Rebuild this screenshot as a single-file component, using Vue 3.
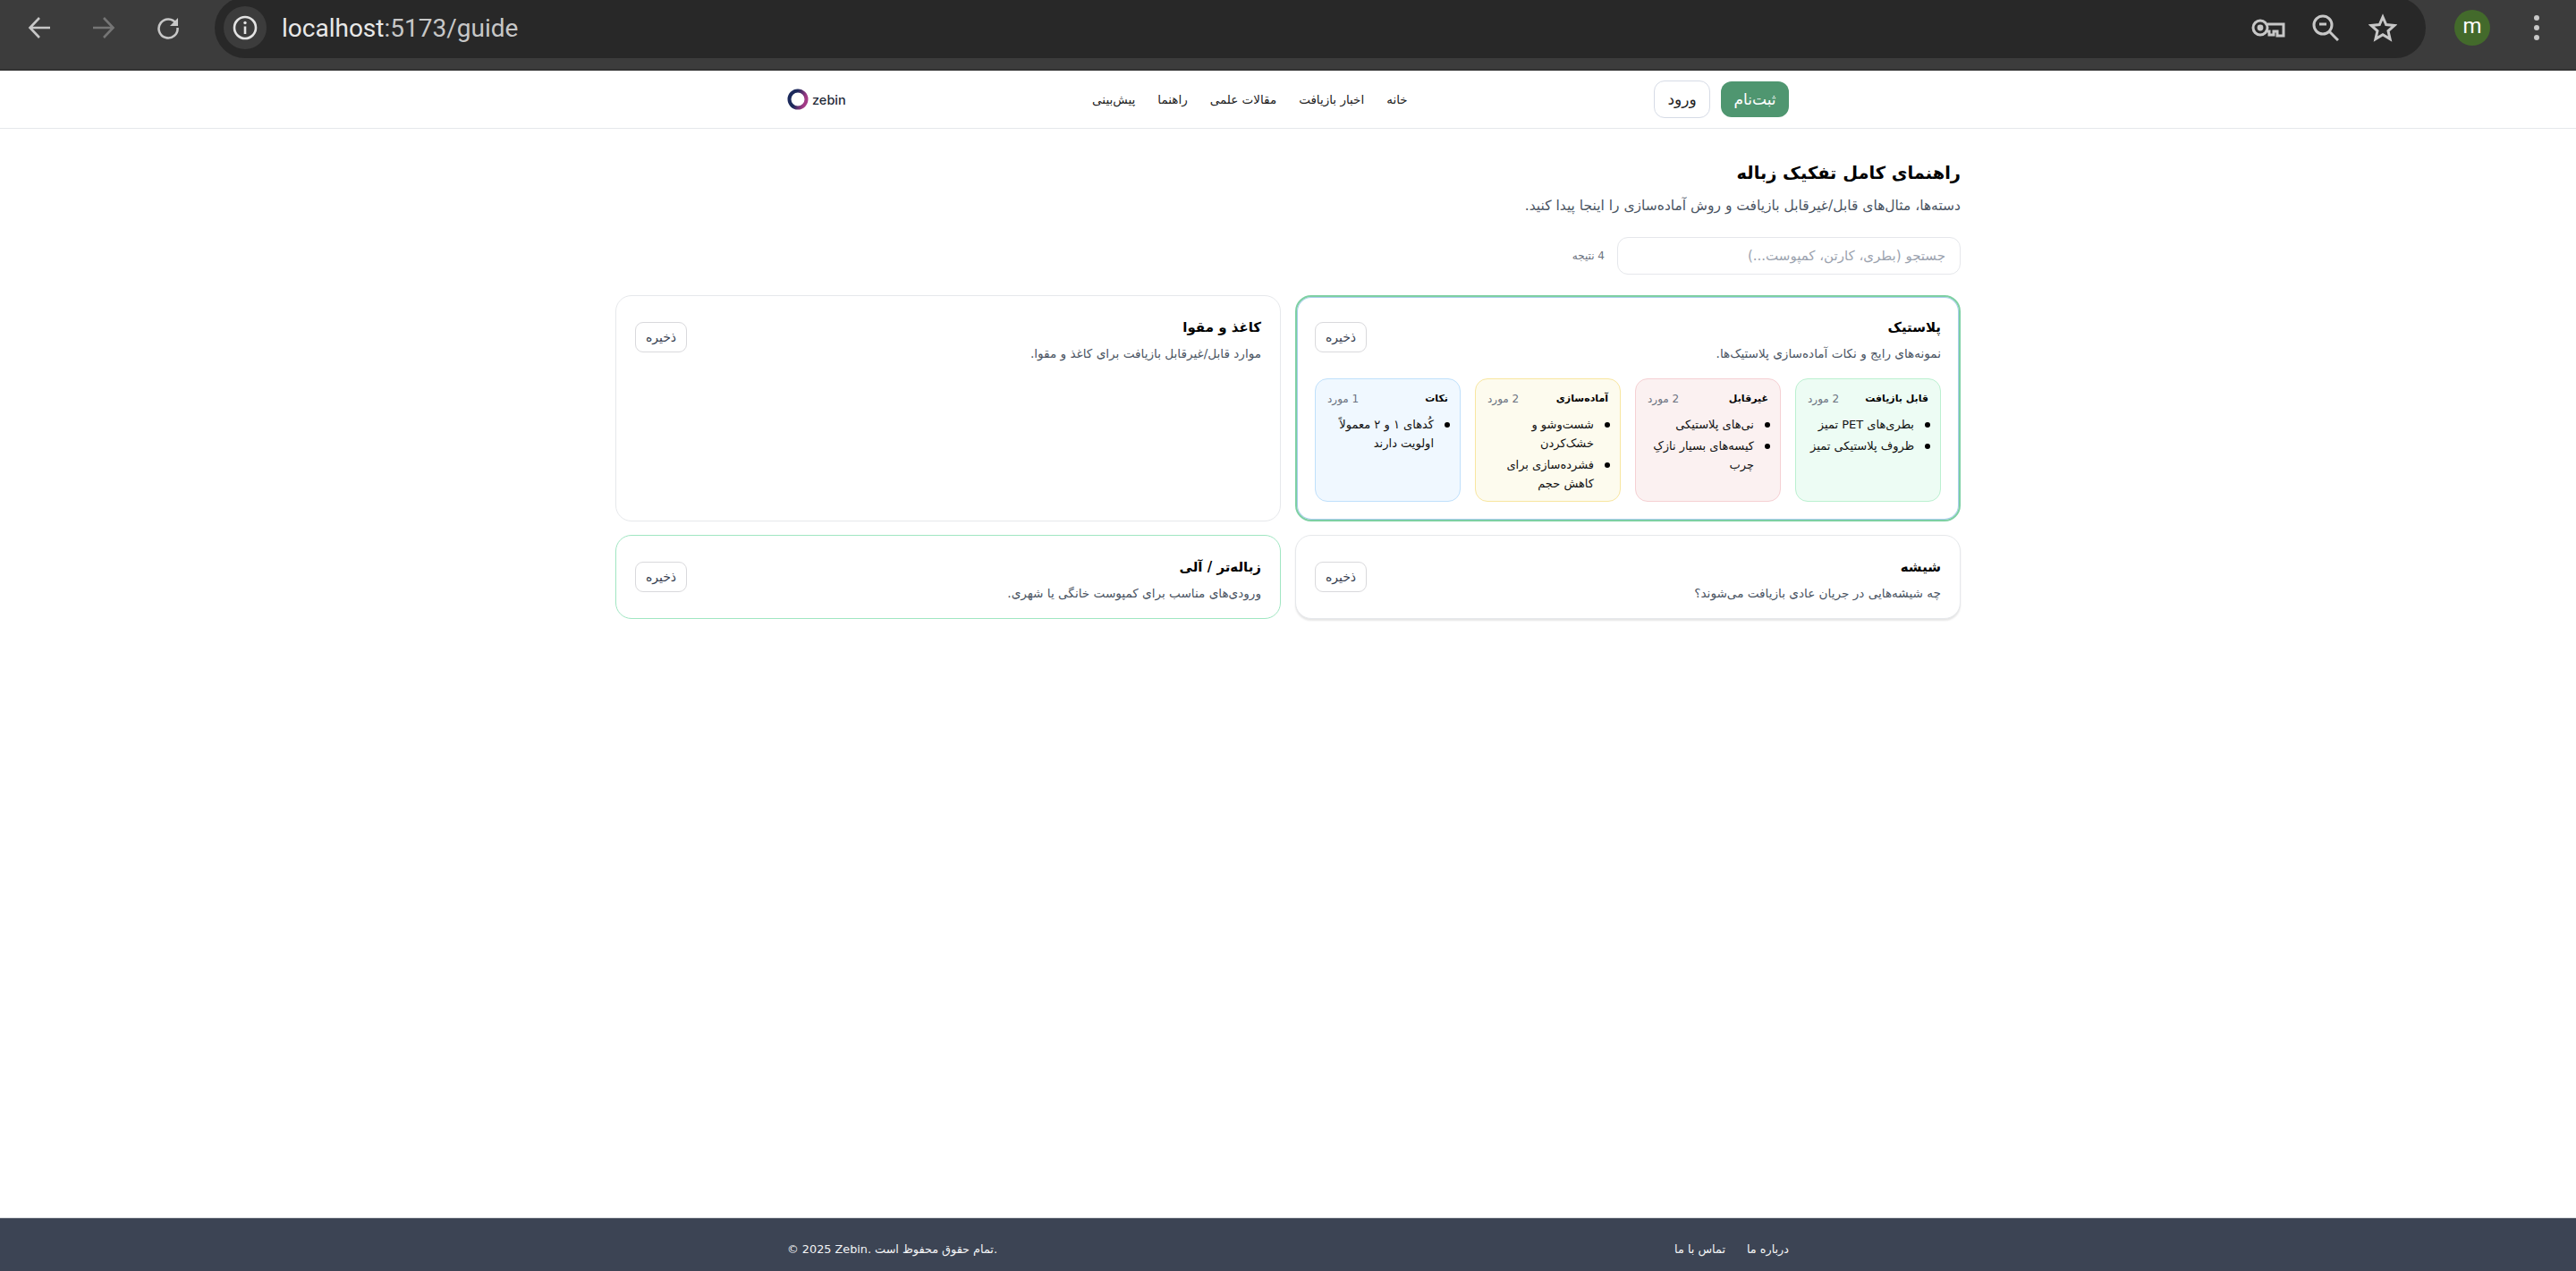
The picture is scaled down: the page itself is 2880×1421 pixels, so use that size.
<script setup>
const links = ['خانه', 'اخبار بازیافت', 'مقالات علمی', 'راهنما', 'پیش‌بینی'];

const plasticPanels = [
  { title: 'قابل بازیافت', tone: 'green', items: ['بطری‌های PET تمیز', 'ظروف پلاستیکی تمیز'] },
  { title: 'غیرقابل', tone: 'red', items: ['نی‌های پلاستیکی', 'کیسه‌های بسیار نازکِ چرب'] },
  { title: 'آماده‌سازی', tone: 'yellow', items: ['شست‌وشو و خشک‌کردن', 'فشرده‌سازی برای کاهش حجم'] },
  { title: 'نکات', tone: 'blue', items: ['کُدهای ۱ و ۲ معمولاً اولویت دارند'] },
];
</script>

<template>
  <div class="page">
    <div class="chrome">
      <div class="chrome-btn">
        <svg width="28" height="28" viewBox="0 0 28 28"><path d="M26 14H4M14 3 3.5 14 14 25" fill="none" stroke="#c7c7c7" stroke-width="2.6"/></svg>
      </div>
      <div class="chrome-btn">
        <svg width="28" height="28" viewBox="0 0 28 28"><path d="M2 14h22M14 3l10.5 11L14 25" fill="none" stroke="#757575" stroke-width="2.6"/></svg>
      </div>
      <div class="chrome-btn">
        <svg width="28" height="28" viewBox="0 0 28 28"><path d="M23 9.5A10.5 10.5 0 1 0 24.5 14" fill="none" stroke="#c7c7c7" stroke-width="2.6"/><path d="M25 3v9h-9z" fill="#c7c7c7"/></svg>
      </div>
      <div class="omnibox">
        <div class="site-info">
          <svg width="30" height="30" viewBox="0 0 30 30"><circle cx="15" cy="15" r="12" fill="none" stroke="#e3e3e3" stroke-width="2.6"/><path d="M15 13.5V22" stroke="#e3e3e3" stroke-width="2.6"/><circle cx="15" cy="9.5" r="1.7" fill="#e3e3e3"/></svg>
        </div>
        <div class="url"><span class="host">localhost</span>:5173/guide</div>
        <div class="omni-icon">
          <svg width="38" height="22" viewBox="0 0 38 22"><circle cx="10" cy="11" r="8" fill="none" stroke="#c7c7c7" stroke-width="3"/><circle cx="10" cy="11" r="3.4" fill="#c7c7c7"/><path d="M18 7h18v13h-7v-5h-4v4h-5v-4h-2" fill="none" stroke="#c7c7c7" stroke-width="3"/></svg>
        </div>
        <div class="omni-icon">
          <svg width="30" height="30" viewBox="0 0 30 30"><circle cx="12" cy="12" r="10" fill="none" stroke="#c7c7c7" stroke-width="3"/><path d="M19 19l10 10" stroke="#c7c7c7" stroke-width="3"/><path d="M8 11h8" stroke="#c7c7c7" stroke-width="3"/></svg>
        </div>
        <div class="omni-icon">
          <svg width="32" height="32" viewBox="0 0 32 32"><path d="M16 4l3.7 8.6 9.3.8-7 6.1 2.1 9.1-8.1-4.8-8.1 4.8 2.1-9.1-7-6.1 9.3-.8z" fill="none" stroke="#c7c7c7" stroke-width="3"/></svg>
        </div>
      </div>
      <div class="avatar">m</div>
      <div class="dots"><i></i><i></i><i></i></div>
    </div>

    <header class="topbar">
      <div class="topbar-inner">
        <div class="auth">
          <button class="btn-signup">ثبت‌نام</button>
          <button class="btn-login">ورود</button>
        </div>
        <nav class="links">
          <a v-for="l in links" :key="l">{{ l }}</a>
        </nav>
        <div class="logo" dir="ltr">
          <svg width="24" height="24" viewBox="0 0 24 24">
            <defs>
              <linearGradient id="ring" x1="0" y1="0" x2="1" y2="0.3">
                <stop offset="0.45" stop-color="#1c2a5c" />
                <stop offset="1" stop-color="#a33a86" />
              </linearGradient>
            </defs>
            <circle cx="12" cy="12" r="9.5" fill="none" stroke="url(#ring)" stroke-width="4" />
          </svg>
          <span>zebin</span>
        </div>
      </div>
    </header>

    <main class="main">
      <h1>راهنمای کامل تفکیک زباله</h1>
      <p class="lead">دسته‌ها، مثال‌های قابل/غیرقابل بازیافت و روش آماده‌سازی را اینجا پیدا کنید.</p>

      <div class="search-row">
        <input class="search" placeholder="جستجو (بطری، کارتن، کمپوست...)" />
        <span class="result-count">4 نتیجه</span>
      </div>

      <section class="cards">
        <article class="card card-open">
          <div class="card-head">
            <div>
              <h2>پلاستیک</h2>
              <p>نمونه‌های رایج و نکات آماده‌سازی پلاستیک‌ها.</p>
            </div>
            <button class="save">ذخیره</button>
          </div>
          <div class="panels">
            <div v-for="p in plasticPanels" :key="p.title" class="panel" :class="p.tone">
              <div class="panel-head">
                <strong>{{ p.title }}</strong>
                <span>{{ p.items.length }} مورد</span>
              </div>
              <ul>
                <li v-for="item in p.items" :key="item">{{ item }}</li>
              </ul>
            </div>
          </div>
        </article>

        <article class="card card-plain">
          <div class="card-head">
            <div>
              <h2>کاغذ و مقوا</h2>
              <p>موارد قابل/غیرقابل بازیافت برای کاغذ و مقوا.</p>
            </div>
            <button class="save">ذخیره</button>
          </div>
        </article>

        <article class="card card-shadow">
          <div class="card-head">
            <div>
              <h2>شیشه</h2>
              <p>چه شیشه‌هایی در جریان عادی بازیافت می‌شوند؟</p>
            </div>
            <button class="save">ذخیره</button>
          </div>
        </article>

        <article class="card card-green">
          <div class="card-head">
            <div>
              <h2>زباله‌تر / آلی</h2>
              <p>ورودی‌های مناسب برای کمپوست خانگی یا شهری.</p>
            </div>
            <button class="save">ذخیره</button>
          </div>
        </article>
      </section>
    </main>

    <footer class="footer">
      <div class="footer-inner">
        <div class="footer-links">
          <a>درباره ما</a>
          <a>تماس با ما</a>
        </div>
        <div dir="ltr">© 2025 Zebin. تمام حقوق محفوظ است.</div>
      </div>
    </footer>
  </div>
</template>

<style>
html, body {
  margin: 0;
  background: #fff;
}
</style>

<style scoped>
.page {
  min-height: 100vh;
  display: flex;
  flex-direction: column;
  font-family: "DejaVu Sans", sans-serif;
  color: #111;
}

/* browser toolbar */
.chrome {
  height: 79px;
  box-sizing: border-box;
  border-bottom: 2px solid #333;
  background: #3c3c3c;
  display: flex;
  align-items: flex-start;
  padding-left: 8px;
  overflow: hidden;
  flex-shrink: 0;
}
.chrome-btn {
  width: 72px;
  height: 62px;
  display: flex;
  align-items: center;
  justify-content: center;
}
.omnibox {
  flex: 1;
  height: 68px;
  margin: -3px 0 0 16px;
  background: #282828;
  border-radius: 34px;
  display: flex;
  align-items: center;
  padding: 0 16px 0 10px;
}
.site-info {
  width: 48px;
  height: 48px;
  border-radius: 50%;
  background: #3c3c3c;
  display: flex;
  align-items: center;
  justify-content: center;
}
.url {
  flex: 1;
  margin-left: 17px;
  font-family: Roboto, sans-serif;
  font-size: 28px;
  color: #c7c7c7;
}
.host {
  color: #e8e8e8;
}
.omni-icon {
  width: 64px;
  display: flex;
  justify-content: center;
}
.avatar {
  width: 40px;
  height: 40px;
  margin: 11px 0 0 32px;
  border-radius: 50%;
  background: #436a2b;
  color: #fff;
  font-family: Roboto, sans-serif;
  font-size: 24px;
  line-height: 37px;
  text-align: center;
}
.dots {
  margin: 17px 41px 0 49px;
  width: 6px;
  display: flex;
  flex-direction: column;
  gap: 5px;
}
.dots i {
  width: 6px;
  height: 6px;
  border-radius: 50%;
  background: #c7c7c7;
}

/* site nav */
.topbar {
  height: 65px;
  box-sizing: border-box;
  border-bottom: 1px solid #e5e7eb;
  flex-shrink: 0;
}
.topbar-inner {
  direction: rtl;
  width: 1120px;
  height: 64px;
  margin: 0 auto;
  display: flex;
  align-items: center;
  justify-content: space-between;
}
.auth {
  display: flex;
  align-items: center;
  gap: 12px;
}
.auth button {
  font-family: inherit;
  font-size: 17px;
  border-radius: 12px;
  cursor: pointer;
  padding: 0;
}
.btn-signup {
  width: 76px;
  height: 40px;
  border: 0;
  background: #4f9670;
  color: #fff;
}
.btn-login {
  width: 63px;
  height: 42px;
  border: 1px solid #d6dbe6;
  background: #fff;
  color: #222;
}
.links {
  display: flex;
  gap: 25px;
  font-size: 13.5px;
  color: #222;
}
.logo {
  display: flex;
  align-items: center;
  gap: 4px;
  font-size: 14.5px;
  font-weight: 500;
  font-family: Inter, sans-serif;
  color: #1f2937;
}

/* main */
.main {
  direction: rtl;
  flex: 1;
  width: 1504px;
  margin: 0 auto;
  padding-top: 32px;
  box-sizing: border-box;
}
h1 {
  margin: 0;
  font-size: 19.4px;
  line-height: 36px;
  font-weight: 700;
  color: #000;
}
.lead {
  margin: 6px 0 0;
  font-size: 15.5px;
  line-height: 24px;
  color: #4b5563;
}
.search-row {
  display: flex;
  align-items: center;
  gap: 14px;
  margin-top: 23px;
}
.search {
  width: 384px;
  height: 42px;
  box-sizing: border-box;
  padding: 0 16px;
  border: 1px solid #e5e7eb;
  border-radius: 12px;
  font-family: inherit;
  font-size: 15px;
  outline: none;
}
.search::placeholder {
  color: #9ca3af;
}
.result-count {
  font-size: 12px;
  color: #6b7280;
}

.cards {
  display: grid;
  grid-template-columns: 1fr 1fr;
  gap: 15px 16px;
  margin-top: 23px;
}
.card {
  box-sizing: border-box;
  padding: 21px 21px 18px;
  border-radius: 18px;
  background: #fff;
  border: 1px solid #e6e8eb;
}
.card-open {
  border: 2px solid #7dd0a3;
  box-shadow: inset 0 0 0 1px #a9cdec;
  padding: 20px;
}
.card-shadow {
  box-shadow: 0 2px 2px rgba(0, 0, 0, 0.1);
}
.card-green {
  border-color: #a0e6c2;
}
.card-head {
  display: flex;
  justify-content: space-between;
  align-items: flex-start;
}
h2 {
  margin: 0;
  font-size: 15px;
  line-height: 28px;
  font-weight: 700;
  color: #000;
}
.card-head p {
  margin: 5px 0 0;
  font-size: 13.6px;
  line-height: 20px;
  color: #4b5563;
}
.save {
  margin-top: 8px;
  width: 58px;
  height: 34px;
  padding: 0;
  border: 1px solid #d9d9dc;
  border-radius: 9px;
  background: #fff;
  color: #374151;
  font-family: inherit;
  font-size: 14px;
  cursor: pointer;
}
.panels {
  display: grid;
  grid-template-columns: repeat(4, 1fr);
  gap: 16px;
  margin-top: 18px;
}
.panel {
  height: 138px;
  box-sizing: border-box;
  padding: 12px 13px;
  border: 1px solid;
  border-radius: 14px;
  font-size: 13px;
}
.panel.green {
  background: #edfcf4;
  border-color: #bbf0d0;
}
.panel.red {
  background: #fbf1f1;
  border-color: #f5d0d3;
}
.panel.yellow {
  background: #fdfbee;
  border-color: #f8e6a0;
}
.panel.blue {
  background: #f0f8ff;
  border-color: #bfe0fb;
}
.panel-head {
  display: flex;
  justify-content: space-between;
  align-items: center;
  line-height: 20px;
}
.panel-head strong {
  font-size: 11px;
  color: #000;
}
.panel-head span {
  font-size: 12px;
  color: #6b7280;
}
ul {
  margin: 8px 0 0;
  padding: 0 16px 0 0;
  list-style: none;
  color: #111;
}
li {
  position: relative;
  line-height: 21px;
  margin-bottom: 3px;
}
li::before {
  content: '';
  position: absolute;
  right: -18px;
  top: 8px;
  width: 6px;
  height: 6px;
  border-radius: 50%;
  background: #000;
}

.footer {
  height: 60px;
  box-sizing: border-box;
  border-top: 1px solid #d7d9dd;
  background: #3c4454;
  color: #f3f4f6;
  font-size: 12.8px;
  flex-shrink: 0;
}
.footer-inner {
  direction: rtl;
  width: 1120px;
  height: 100%;
  margin: 0 auto;
  display: flex;
  align-items: center;
  justify-content: space-between;
  padding-top: 10px;
  box-sizing: border-box;
}
.footer-links {
  display: flex;
  gap: 24px;
}
</style>
